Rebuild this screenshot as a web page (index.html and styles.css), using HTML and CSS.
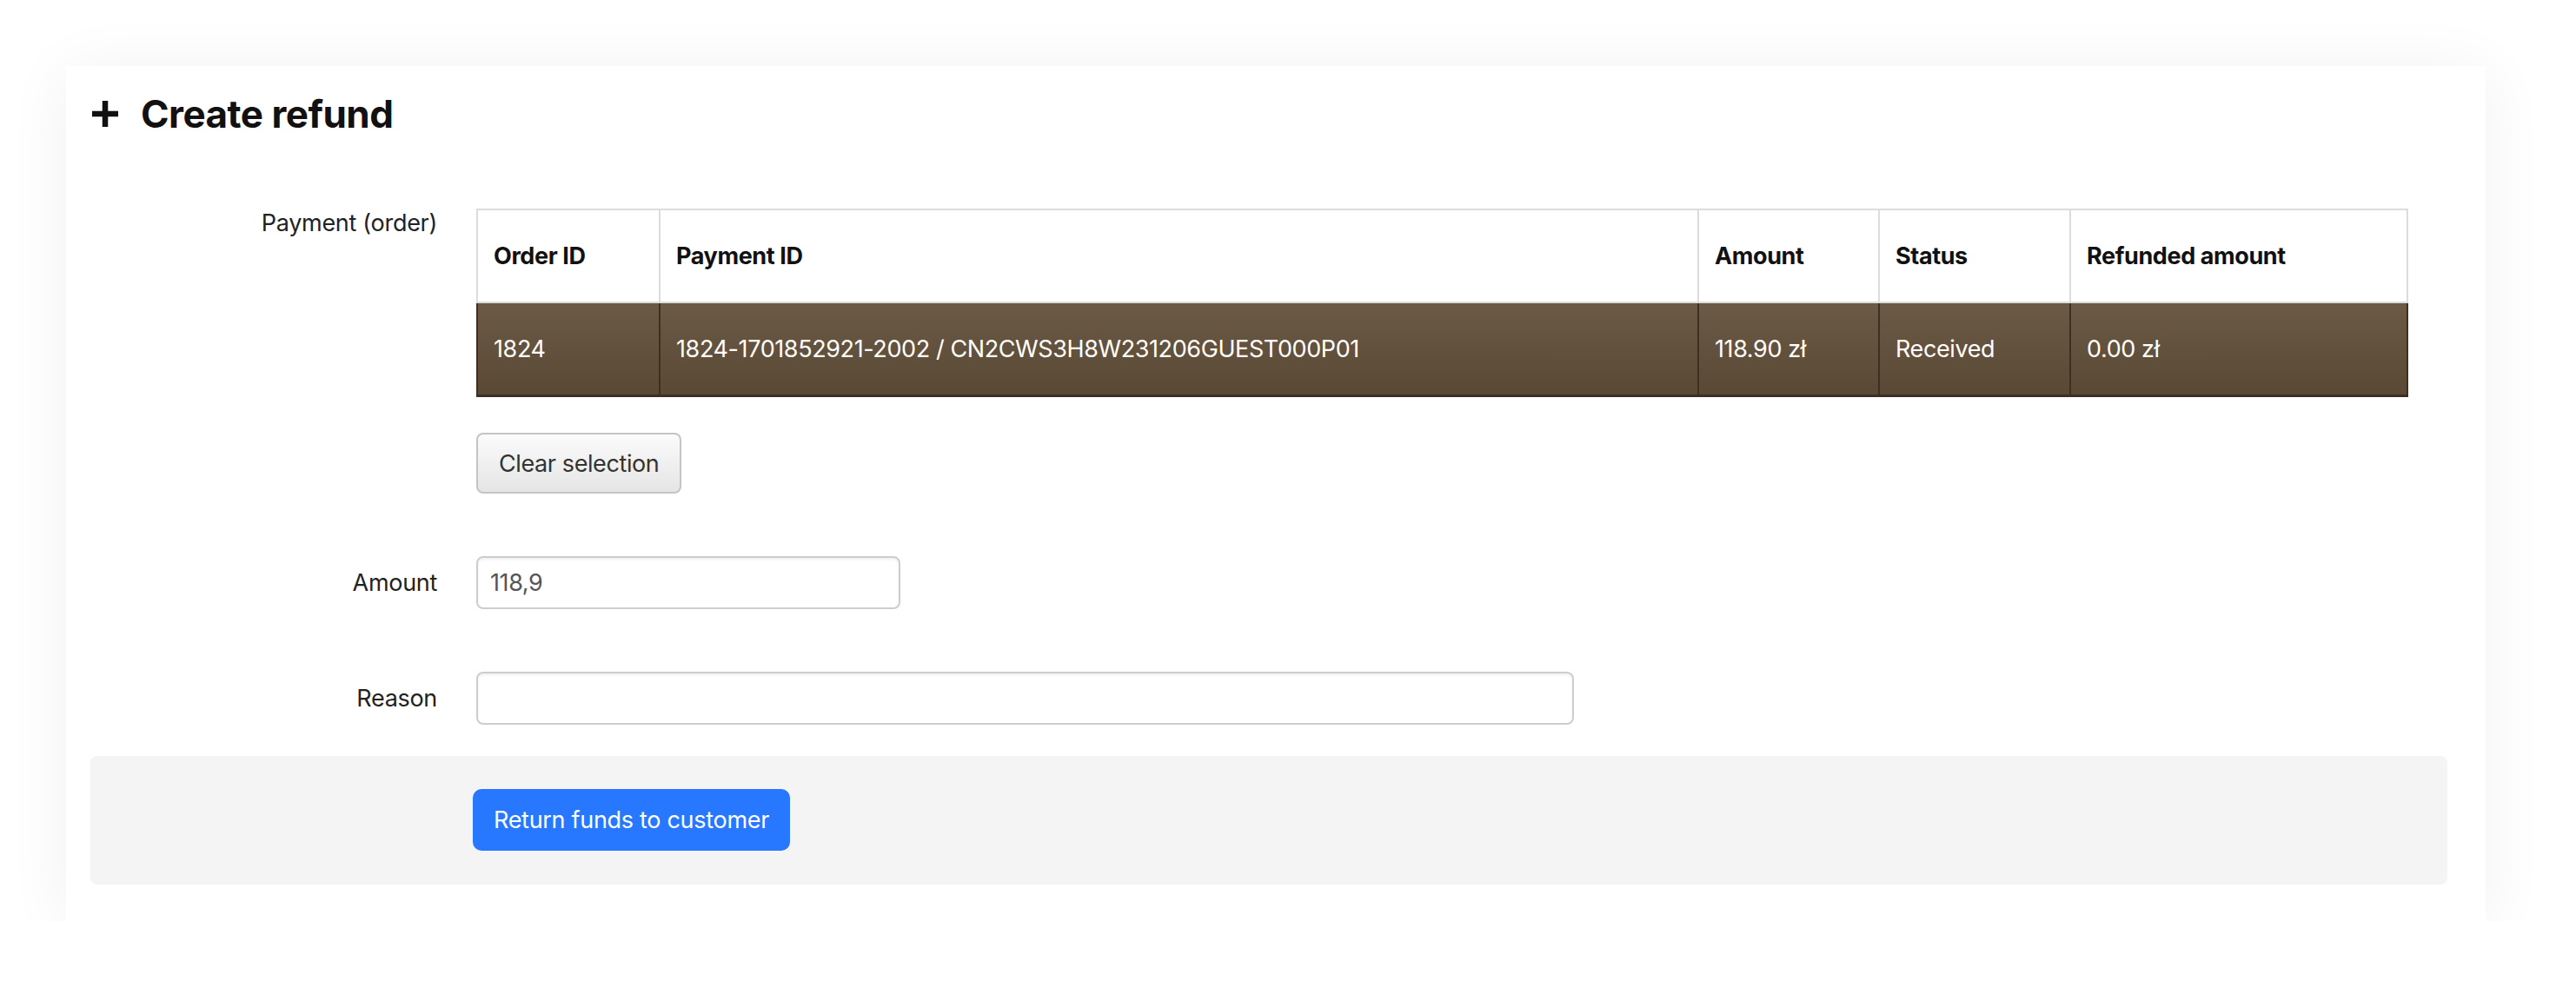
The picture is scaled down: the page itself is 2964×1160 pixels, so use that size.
FILE: index.html
```html
<!DOCTYPE html>
<html lang="en">

<head>
    <meta charset="UTF-8">
    <meta name="viewport" content="width=device-width, initial-scale=1.0">
    <title>Create refund</title>
    <link rel="stylesheet" href="styles.css">
</head>

<body>
    <div class="card">
        <h1 class="title">
            <svg class="plus" width="34" height="34" viewBox="0 0 34 34" aria-hidden="true">
                <path d="M17 2 V32 M2 17 H32" stroke="#111" stroke-width="6.5" fill="none" />
            </svg>
            Create refund
        </h1>

        <div class="form-row payment-row">
            <label class="row-label">Payment (order)</label>
            <div class="field">
                <table class="payments">
                    <colgroup>
                        <col style="width: 210px">
                        <col style="width: 1195px">
                        <col style="width: 208px">
                        <col style="width: 220px">
                        <col style="width: 388px">
                    </colgroup>
                    <thead>
                        <tr>
                            <th>Order ID</th>
                            <th>Payment ID</th>
                            <th>Amount</th>
                            <th>Status</th>
                            <th>Refunded amount</th>
                        </tr>
                    </thead>
                    <tbody>
                        <tr class="selected">
                            <td>1824</td>
                            <td>1824-1701852921-2002 / CN2CWS3H8W231206GUEST000P01</td>
                            <td>118.90 zł</td>
                            <td>Received</td>
                            <td>0.00 zł</td>
                        </tr>
                    </tbody>
                </table>
                <button class="btn-clear" type="button">Clear selection</button>
            </div>
        </div>

        <div class="form-row">
            <label class="row-label" for="amount">Amount</label>
            <input class="text-input amount-input" id="amount" type="text" value="118,9">
        </div>

        <div class="form-row">
            <label class="row-label" for="reason">Reason</label>
            <input class="text-input reason-input" id="reason" type="text">
        </div>

        <div class="actions">
            <button class="btn-primary" type="button">Return funds to customer</button>
        </div>
    </div>
</body>

</html>
```

FILE: styles.css
```css
/* Page */
body {
    font-family: 'Inter', 'Liberation Sans', sans-serif;
    margin: 0;
    padding: 76px 0 0 76px;
    background: #ffffff;
    color: #222;
}

.card {
    box-sizing: border-box;
    width: 2784px;
    height: 984px;
    background: #ffffff;
    padding: 28px 44px 42px 28px;
    box-shadow: 0 6px 70px rgba(0, 0, 0, 0.06);
}

.title {
    display: flex;
    align-items: center;
    gap: 24px;
    margin: 0;
    font-size: 44px;
    font-weight: 700;
    letter-spacing: -0.5px;
    color: #111;
}

.plus {
    display: block;
}

/* Form rows */
.form-row {
    display: grid;
    grid-template-columns: 399px auto;
    column-gap: 45px;
    align-items: center;
    margin-top: 72px;
}

.payment-row {
    align-items: start;
    margin-top: 82px;
}

.row-label {
    text-align: right;
    font-size: 27px;
    line-height: 34px;
    color: #222;
    letter-spacing: -0.3px;
}

.field {
    display: flex;
    flex-direction: column;
    align-items: flex-start;
}

/* Payments table */
.payments {
    width: 2221px;
    border-collapse: collapse;
    table-layout: fixed;
    font-size: 27px;
    letter-spacing: -0.4px;
}

.payments th,
.payments td {
    height: 105px;
    padding: 0 18px;
    text-align: left;
    white-space: nowrap;
}

.payments th {
    font-weight: 700;
    color: #111;
    background: #ffffff;
    border: 2px solid #dcdcdc;
}

.payments .selected {
    background: linear-gradient(#6b5a45, #594834);
}

.payments .selected td {
    color: #ffffff;
    border: 2px solid #3d3022;
    border-bottom-width: 3px;
}

.btn-clear {
    margin-top: 41px;
    height: 70px;
    padding: 0 24px;
    font-family: inherit;
    font-size: 27px;
    letter-spacing: -0.4px;
    color: #333;
    background: linear-gradient(#fbfbfb, #e5e5e5);
    border: 2px solid #c4c4c4;
    border-radius: 8px;
}

/* Inputs */
.text-input {
    box-sizing: border-box;
    height: 61px;
    padding: 0 14px;
    font-family: inherit;
    font-size: 27px;
    letter-spacing: -0.4px;
    color: #555;
    border: 2px solid #cdcdcd;
    border-radius: 8px;
    box-shadow: inset 0 2px 3px rgba(0, 0, 0, 0.06);
    outline: none;
}

.amount-input {
    width: 488px;
}

.reason-input {
    width: 1263px;
}

/* Footer actions */
.actions {
    margin-top: 36px;
    background: #f4f4f4;
    border-radius: 8px;
    padding: 38px 0 39px 440px;
}

.btn-primary {
    height: 71px;
    padding: 0 24px;
    font-family: inherit;
    font-size: 27px;
    letter-spacing: -0.3px;
    color: #ffffff;
    background: #2777ff;
    border: none;
    border-radius: 10px;
}
```
